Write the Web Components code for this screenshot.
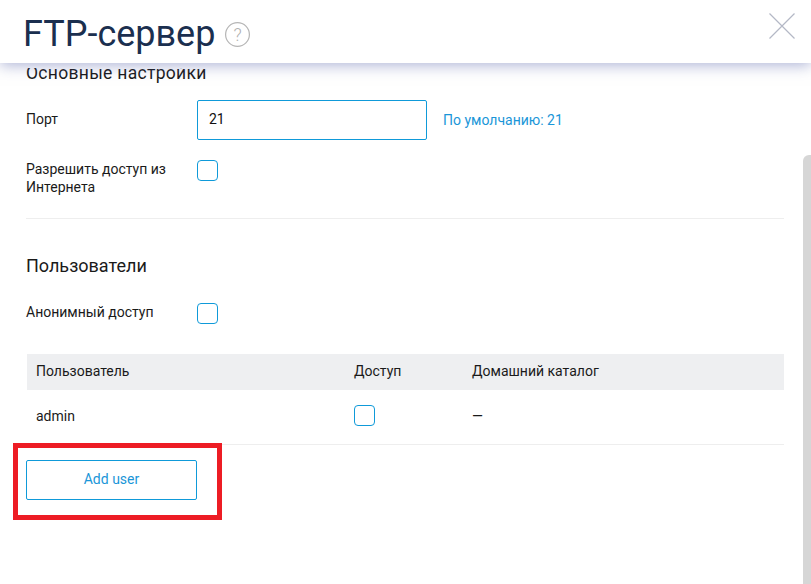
<!DOCTYPE html>
<html lang="ru">
<head>
<meta charset="utf-8">
<title>FTP-сервер</title>
<style>
    html, body { margin: 0; height: 100%; background: #fff; overflow: hidden; }
    body { font: 14px/18px Roboto, "Liberation Sans", sans-serif; color: #1a1a1a; }
</style>
</head>
<body>
<ftp-dialog>
    <dialog-header slot="header" title-text="FTP-сервер"></dialog-header>
    <section-title class="first">Основные настройки</section-title>
    <form-row label="Порт" height="38" top="0">
        <text-field value="21"></text-field>
        <span slot="hint">По умолчанию: 21</span>
    </form-row>
    <form-row label="Разрешить доступ из Интернета" top="20">
        <check-box></check-box>
    </form-row>
    <h-line></h-line>
    <section-title>Пользователи</section-title>
    <form-row label="Анонимный доступ" top="25">
        <check-box></check-box>
    </form-row>
    <user-table></user-table>
    <add-button>Add user</add-button>
</ftp-dialog>

<script>
const dialogTemplate = document.createElement('template')
dialogTemplate.innerHTML = `
<style>
    :host{
        display: flex;
        flex-direction: column;
        position: relative;
        width: 811px;
        height: 584px;
        overflow: hidden;
    }
    .content{
        flex: 1;
        min-height: 0;
        overflow: hidden;
        margin-top: 5px;
        padding: 0 27px 0 26px;
    }
    .scrollbar{
        position: absolute;
        top: 155px;
        right: 0;
        bottom: 0;
        width: 8px;
        background: #d6d6d6;
        border-top-left-radius: 6px;
    }
    .mark{
        position: absolute;
        left: 13px;
        top: 443px;
        width: 199px;
        height: 67px;
        border: 5px solid #ed1c24;
    }
</style>
<slot name="header"></slot>
<div class="content"><slot></slot></div>
<div class="scrollbar"></div>
<div class="mark"></div>
`
class FtpDialog extends HTMLElement{
    constructor(){
        super()
        this.attachShadow({mode:"open"})
        this.shadowRoot.appendChild(dialogTemplate.content.cloneNode(true))
    }
}

const headerTemplate = document.createElement('template')
headerTemplate.innerHTML = `
<style>
    :host{
        display: flex;
        align-items: center;
        flex: none;
        height: 63px;
        position: relative;
        z-index: 2;
        background: #fff;
        box-shadow: 0 2px 14px rgba(88, 100, 170, .5);
        padding: 0 16px 0 23px;
    }
    h1{
        margin: 4px 0 0;
        font: 400 36px/40px Roboto, "Liberation Sans", sans-serif;
        color: #1b2f4f;
    }
    .help{
        display: block;
        margin: 6px 0 0 10px;
    }
    .help text{
        font: 300 18px Roboto, "Liberation Sans", sans-serif;
        fill: #b0b0b0;
    }
    .close{
        display: block;
        margin: -12px 0 0 auto;
    }
</style>
<h1></h1>
<svg class="help" width="25" height="25" viewBox="0 0 25 25">
    <circle cx="12.5" cy="12.5" r="11.9" fill="none" stroke="#b5b5b5" stroke-width="1.2"/>
    <text x="12.5" y="18.500" text-anchor="middle">?</text>
</svg>
<svg class="close" width="26" height="26" viewBox="0 0 26 26">
    <path d="M.5.5l25 25M25.500.5l-25 25" fill="none" stroke="#b4b8c6" stroke-width="1.2"/>
</svg>
`
class DialogHeader extends HTMLElement{
    constructor(){
        super()
        this.attachShadow({mode:"open"})
    }
    connectedCallback(){
        const copy = headerTemplate.content.cloneNode(true)
        copy.querySelector('h1').textContent = this.getAttribute('title-text') ?? ''
        this.shadowRoot.appendChild(copy)
    }
}

const sectionTemplate = document.createElement('template')
sectionTemplate.innerHTML = `
<style>
    :host{
        display: block;
        font: 400 18px/24px Roboto, "Liberation Sans", sans-serif;
        color: #1a1a1a;
        margin: 35px 0 25px;
    }
    :host(.first){
        font-size: 17.5px;
        letter-spacing: .3px;
        margin: -7px 0 15px;
    }
</style>
<slot></slot>
`
class SectionTitle extends HTMLElement{
    constructor(){
        super()
        this.attachShadow({mode:"open"})
        this.shadowRoot.appendChild(sectionTemplate.content.cloneNode(true))
    }
}

const rowTemplate = document.createElement('template')
rowTemplate.innerHTML = `
<style>
    :host{
        display: flex;
        align-items: flex-start;
    }
    .label{
        width: 171px;
        flex: none;
        padding-right: 10px;
        box-sizing: border-box;
        line-height: 18px;
        color: #1a1a1a;
    }
    .hint{
        margin-left: 16px;
        color: #1a96d8;
        align-self: center;
    }
</style>
<div class="label"></div>
<slot></slot>
<div class="hint"><slot name="hint"></slot></div>
`
class FormRow extends HTMLElement{
    constructor(){
        super()
        this.attachShadow({mode:"open"})
    }
    connectedCallback(){
        const copy = rowTemplate.content.cloneNode(true)
        const label = copy.querySelector('.label')
        label.textContent = this.getAttribute('label') ?? ''
        if(this.hasAttribute('height')){
            label.style.lineHeight = this.getAttribute('height') + 'px'
        }
        this.style.marginTop = (this.getAttribute('top') ?? 0) + 'px'
        this.shadowRoot.appendChild(copy)
    }
}

const fieldTemplate = document.createElement('template')
fieldTemplate.innerHTML = `
<style>
    :host{
        display: block;
        width: 230px;
        height: 40px;
        box-sizing: border-box;
        border: 1px solid #0f9ad9;
        border-radius: 2px;
        padding: 0 11px;
        line-height: 36px;
        color: #111;
    }
</style>
<span></span>
`
class TextField extends HTMLElement{
    constructor(){
        super()
        this.attachShadow({mode:"open"})
    }
    connectedCallback(){
        const copy = fieldTemplate.content.cloneNode(true)
        copy.querySelector('span').textContent = this.getAttribute('value') ?? ''
        this.shadowRoot.appendChild(copy)
    }
}

const checkTemplate = document.createElement('template')
checkTemplate.innerHTML = `
<style>
    :host{
        display: block;
        flex: none;
        width: 21px;
        height: 21px;
        box-sizing: border-box;
        border: 1px solid #0f9ad9;
        border-radius: 4px;
        background: #fff;
    }
</style>
`
class CheckBox extends HTMLElement{
    constructor(){
        super()
        this.attachShadow({mode:"open"})
        this.shadowRoot.appendChild(checkTemplate.content.cloneNode(true))
    }
}

const lineTemplate = document.createElement('template')
lineTemplate.innerHTML = `
<style>
    :host{
        display: block;
        height: 1px;
        background: #eeeeee;
        margin-top: 22px;
    }
</style>
`
class HLine extends HTMLElement{
    constructor(){
        super()
        this.attachShadow({mode:"open"})
        this.shadowRoot.appendChild(lineTemplate.content.cloneNode(true))
    }
}

const tableTemplate = document.createElement('template')
tableTemplate.innerHTML = `
<style>
    :host{
        display: block;
        margin-top: 30px;
    }
    .row{
        display: grid;
        grid-template-columns: 318px 118px 1fr;
        align-items: center;
        box-sizing: border-box;
        padding-left: 10px;
        color: #1a1a1a;
    }
    .head{
        height: 36px;
        margin-left: 1px;
        padding: 0 0 2px 9px;
        background: #eeeff1;
    }
    .body{
        height: 55px;
        padding-bottom: 2px;
        border-bottom: 1px solid #eeeeee;
    }
    .body check-box{
        margin-bottom: 1px;
    }
</style>
<div class="row head">
    <span>Пользователь</span>
    <span>Доступ</span>
    <span>Домашний каталог</span>
</div>
<div class="row body">
    <span>admin</span>
    <check-box></check-box>
    <span>—</span>
</div>
`
class UserTable extends HTMLElement{
    constructor(){
        super()
        this.attachShadow({mode:"open"})
        this.shadowRoot.appendChild(tableTemplate.content.cloneNode(true))
    }
}

const buttonTemplate = document.createElement('template')
buttonTemplate.innerHTML = `
<style>
    :host{
        display: block;
        width: 171px;
        height: 40px;
        box-sizing: border-box;
        margin-top: 15px;
        border: 1px solid #0f9ad9;
        border-radius: 2px;
        color: #1a96d8;
        text-align: center;
        line-height: 36px;
    }
</style>
<slot></slot>
`
class AddButton extends HTMLElement{
    constructor(){
        super()
        this.attachShadow({mode:"open"})
        this.shadowRoot.appendChild(buttonTemplate.content.cloneNode(true))
    }
}

window.customElements.define('ftp-dialog', FtpDialog)
window.customElements.define('dialog-header', DialogHeader)
window.customElements.define('section-title', SectionTitle)
window.customElements.define('form-row', FormRow)
window.customElements.define('text-field', TextField)
window.customElements.define('check-box', CheckBox)
window.customElements.define('h-line', HLine)
window.customElements.define('user-table', UserTable)
window.customElements.define('add-button', AddButton)
</script>
</body>
</html>
